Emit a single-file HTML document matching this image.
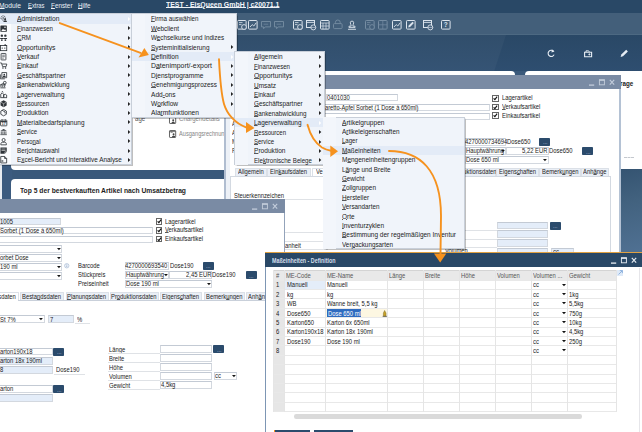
<!DOCTYPE html>
<html lang="de"><head><meta charset="utf-8"><title>TEST - EisQueen GmbH</title><style>
html,body{margin:0;padding:0}
body{width:642px;height:432px;overflow:hidden;position:relative;background:#2a4866;font-family:"Liberation Sans",sans-serif}
#r{position:absolute;left:0;top:0;width:642px;height:432px;overflow:hidden}
#r div{position:absolute;box-sizing:border-box}
#r span{position:absolute;white-space:pre;transform-origin:0 50%}
#r svg{position:absolute;overflow:visible}
u{text-decoration:underline;text-decoration-thickness:0.55px;text-underline-offset:0.3px;text-decoration-color:rgba(20,20,20,.7)}
u.w{text-decoration-color:#eef2f7}
</style></head><body><div id="r">
<div style="left:0.00px;top:12.00px;width:642.00px;height:23.00px;background:#435f7a;"></div>
<div style="left:0.00px;top:0.00px;width:642.00px;height:12.80px;background:#294866;"></div>
<div style="left:0.00px;top:35.00px;width:642.00px;height:37.00px;background:linear-gradient(#2a4866,#2e4e70);"></div>
<svg style="left:0.00px;top:35.00px" width="642" height="37" viewBox="0 0 642 37"><polygon points="0,0 506,0 494,37 0,37" fill="#ffffff" fill-opacity="0.035"/></svg>
<div style="left:0.00px;top:34.30px;width:642.00px;height:0.80px;background:#4d6982;"></div>
<div style="left:0.00px;top:71.00px;width:642.00px;height:361.00px;background:#3a597b;"></div>
<div style="left:600.00px;top:160.00px;width:42.00px;height:100.00px;background:linear-gradient(165deg,#31506e 5%,#42627f 45%,#527396 100%);"></div>
<div style="left:2.00px;top:71.00px;width:10.00px;height:140.00px;background:#3c5b7f;"></div>
<div style="left:0.00px;top:71.00px;width:2.00px;height:140.00px;background:#e8ecf1;"></div>
<span style="left:-1.50px;top:1.00px;font-size:6.6px;line-height:10px;color:#e8eef5;transform:scaleX(1.017);"><u class="w">M</u>odule</span>
<span style="left:27.50px;top:1.00px;font-size:6.6px;line-height:10px;color:#e8eef5;transform:scaleX(0.882);"><u class="w">E</u>xtras</span>
<span style="left:50.70px;top:1.00px;font-size:6.6px;line-height:10px;color:#e8eef5;transform:scaleX(0.962);"><u class="w">F</u>enster</span>
<span style="left:78.00px;top:1.00px;font-size:6.6px;line-height:10px;color:#e8eef5;transform:scaleX(0.947);"><u class="w">H</u>ilfe</span>
<span style="left:166.00px;top:0.20px;font-size:6.6px;line-height:10px;color:#f2f5f9;font-weight:bold;transform:scaleX(1.053);"><u class="w">TEST - EisQueen GmbH | c20071.1</u></span>
<svg style="left:236.50px;top:19.50px" width="10" height="10" viewBox="0 0 10 10"><rect x="0.5" y="0.5" width="8.6" height="8.6" rx="0.8" fill="none" stroke="#dbe3ec" stroke-width="1"/><path d="M2 2.6h3.5M2 4.6h2.5" stroke="#dbe3ec" stroke-width="0.8"/><circle cx="7" cy="7" r="2.4" fill="#435f7a" stroke="#dbe3ec" stroke-width="0.9"/></svg>
<svg style="left:247.50px;top:19.50px" width="10" height="10" viewBox="0 0 10 10"><rect x="0.5" y="0.5" width="8.6" height="8.6" rx="0.8" fill="none" stroke="#dbe3ec" stroke-width="1"/><path d="M2 7l2.2-2.4 1.6 1.4 2.4-3.2" stroke="#dbe3ec" stroke-width="0.9" fill="none"/></svg>
<svg style="left:260.50px;top:19.50px" width="10" height="10" viewBox="0 0 10 10"><path d="M0.5 1.5h9v5.4H4.2l-1.6 1.8V6.9H0.5z" fill="none" stroke="#768da3" stroke-width="0.9"/><path d="M2.6 4.2h4.6" stroke="#768da3" stroke-width="0.7"/></svg>
<svg style="left:274.00px;top:19.50px" width="10" height="10" viewBox="0 0 10 10"><path d="M0.5 1.5h9v5.4H4.2l-1.6 1.8V6.9H0.5z" fill="none" stroke="#768da3" stroke-width="0.9"/><path d="M2.6 4.2h4.6" stroke="#768da3" stroke-width="0.7"/></svg>
<svg style="left:292.50px;top:19.50px" width="10" height="10" viewBox="0 0 10 10"><rect x="0.5" y="0.5" width="8.6" height="8.6" rx="0.8" fill="none" stroke="#dbe3ec" stroke-width="1"/><path d="M2 2.6h3.5M2 4.6h2.5" stroke="#dbe3ec" stroke-width="0.8"/><circle cx="7" cy="7" r="2.4" fill="#435f7a" stroke="#dbe3ec" stroke-width="0.9"/></svg>
<svg style="left:306.00px;top:19.50px" width="10" height="10" viewBox="0 0 10 10"><rect x="0.5" y="0.5" width="8" height="7" fill="none" stroke="#dbe3ec" stroke-width="1"/><path d="M0.5 2.4h8" stroke="#dbe3ec" stroke-width="0.9"/><circle cx="7.3" cy="7.4" r="2.5" fill="#435f7a" stroke="#dbe3ec" stroke-width="0.9"/><path d="M4.8 7.4h5" stroke="#dbe3ec" stroke-width="0.6"/></svg>
<svg style="left:319.50px;top:19.50px" width="10" height="10" viewBox="0 0 10 10"><rect x="0.5" y="0.5" width="8.6" height="8.6" rx="0.8" fill="none" stroke="#dbe3ec" stroke-width="1"/><path d="M0.5 3h8.6M3 3v6M6 3v6M0.5 6h8.6" stroke="#dbe3ec" stroke-width="0.7" fill="none"/></svg>
<svg style="left:333.00px;top:19.50px" width="10" height="10" viewBox="0 0 10 10"><rect x="0.5" y="3.6" width="8.6" height="5" rx="1" fill="none" stroke="#768da3" stroke-width="0.9"/><path d="M2.4 3.6v-1.2a2.4 2.4 0 0 1 4.8 0v1.2" fill="none" stroke="#768da3" stroke-width="0.9"/></svg>
<svg style="left:346.50px;top:19.50px" width="10" height="10" viewBox="0 0 10 10"><path d="M1 9.3h8M2 7.6h6v-1.4h-2.2c0-1.6 0.9-2 0.9-3.4a1.7 1.7 0 0 0-3.4 0c0 1.4 0.9 1.8 0.9 3.4H2z" fill="none" stroke="#dbe3ec" stroke-width="0.9"/></svg>
<svg style="left:364.50px;top:19.50px" width="10" height="10" viewBox="0 0 10 10"><rect x="0.5" y="0.5" width="8.6" height="8.6" rx="0.8" fill="none" stroke="#768da3" stroke-width="1"/><path d="M2 2.6h3.5M2 4.6h2.5" stroke="#768da3" stroke-width="0.8"/><circle cx="7" cy="7" r="2.4" fill="#435f7a" stroke="#768da3" stroke-width="0.9"/></svg>
<svg style="left:378.00px;top:19.50px" width="10" height="10" viewBox="0 0 10 10"><rect x="0.5" y="0.5" width="8.6" height="8.6" rx="0.8" fill="none" stroke="#768da3" stroke-width="1"/><path d="M4.8 0.5v8.6M0.5 4.8h8.6" stroke="#768da3" stroke-width="0.7"/></svg>
<svg style="left:391.50px;top:19.50px" width="10" height="10" viewBox="0 0 10 10"><rect x="0.5" y="0.5" width="8.6" height="8.6" rx="0.8" fill="none" stroke="#dbe3ec" stroke-width="1"/><path d="M2 7l2.2-2.4 1.6 1.4 2.4-3.2" stroke="#dbe3ec" stroke-width="0.9" fill="none"/></svg>
<svg style="left:405.50px;top:19.50px" width="10" height="10" viewBox="0 0 10 10"><rect x="0.5" y="0.5" width="8.6" height="8.6" rx="0.8" fill="none" stroke="#dbe3ec" stroke-width="1"/><path d="M2.2 7.4l0.5-1.9 3.8-3.8 1.4 1.4-3.8 3.8z" fill="#dbe3ec" stroke="none"/></svg>
<svg style="left:423.00px;top:19.50px" width="10" height="10" viewBox="0 0 10 10"><rect x="0.5" y="0.5" width="8" height="7" fill="none" stroke="#dbe3ec" stroke-width="1"/><path d="M0.5 2.4h8" stroke="#dbe3ec" stroke-width="0.9"/><circle cx="7.3" cy="7.4" r="2.5" fill="#435f7a" stroke="#dbe3ec" stroke-width="0.9"/><path d="M4.8 7.4h5" stroke="#dbe3ec" stroke-width="0.6"/></svg>
<svg style="left:441.00px;top:19.50px" width="10" height="10" viewBox="0 0 10 10"><rect x="0.5" y="0.5" width="8.6" height="8.6" rx="0.8" fill="none" stroke="#dbe3ec" stroke-width="1"/><text x="4.8" y="7.3" font-size="6.5" font-weight="bold" text-anchor="middle" fill="#dbe3ec" font-family="Liberation Sans,sans-serif">?</text></svg>
<svg style="left:547.00px;top:49.00px" width="8" height="9" viewBox="0 0 8 9"><path d="M6.6 2.4A3.1 3.1 0 1 0 7.1 5.6" fill="none" stroke="#e6edf4" stroke-width="1.1"/><path d="M4.9 0.2l2.6 2.2-3 1z" fill="#e6edf4"/></svg>
<svg style="left:584.00px;top:50.00px" width="8.5" height="7.5" viewBox="0 0 8.5 7.5"><path d="M0.6 2.2h7v4.6h-7z" fill="none" stroke="#e6edf4" stroke-width="1.1"/><path d="M2 2V0.8h2.6l0.8 1.2M5.4 3.4v2M4.4 4.4h2" fill="none" stroke="#e6edf4" stroke-width="0.9"/></svg>
<svg style="left:620.00px;top:49.00px" width="8" height="8.5" viewBox="0 0 8 8.5"><path d="M0.6 8l0.7-2.4 4.9-4.9 1.7 1.7-4.9 4.9z" fill="#e6edf4"/></svg>
<div style="left:11.00px;top:71.00px;width:504.00px;height:98.50px;background:#fff;border-radius:4px"></div>
<div style="left:524.50px;top:71.00px;width:130.00px;height:98.00px;background:#fff;border-radius:4px"></div>
<div style="left:11.00px;top:178.50px;width:504.00px;height:120.00px;background:#fff;border-radius:4px"></div>
<span style="left:179.00px;top:114.00px;font-size:6.4px;line-height:10px;color:#858585;transform:scaleX(0.950);">Chargendetails</span>
<span style="left:134.60px;top:114.20px;font-size:6.4px;line-height:10px;color:#555;transform:scaleX(0.950);">age</span>
<svg style="left:169.00px;top:130.20px" width="7.4" height="8" viewBox="0 0 7.4 8"><rect x="0.5" y="0.5" width="6.2" height="7" rx="0.6" fill="none" stroke="#555" stroke-width="0.9"/><path d="M1.6 2.2h2M0.5 1.6h6.2" stroke="#555" stroke-width="0.8"/><circle cx="4.6" cy="4.2" r="1" fill="#444"/><path d="M2.9 7.2a1.7 1.7 0 0 1 3.4 0z" fill="#444"/></svg>
<svg style="left:169.00px;top:115.80px" width="7.4" height="8" viewBox="0 0 7.4 8"><rect x="0.5" y="0.5" width="6.2" height="7" rx="0.6" fill="none" stroke="#555" stroke-width="0.9"/><circle cx="4.2" cy="4.2" r="1" fill="#444"/><path d="M2.5 7.2a1.7 1.7 0 0 1 3.4 0z" fill="#444"/></svg>
<span style="left:179.00px;top:128.50px;font-size:6.4px;line-height:10px;color:#858585;transform:scaleX(0.883);">Ausgangsrechnun</span>
<span style="left:20.00px;top:186.00px;font-size:7px;line-height:10px;color:#1d1d1d;font-weight:bold;transform:scaleX(0.961);">Top 5 der bestverkauften Artikel nach Umsatzbetrag</span>
<span style="left:620.00px;top:79.00px;font-size:7px;line-height:10px;color:#1d1d1d;font-weight:bold;transform:scaleX(0.892);">rage</span>
<div style="left:623.60px;top:157.20px;width:10.00px;height:0.80px;border-top:0.8px dashed #c4c8ce"></div>
<div style="left:224.40px;top:74.50px;width:396.30px;height:360.00px;background:#fff;border-left:2.2px solid #b0bdd0;border-right:2px solid #b4c2d4"></div>
<div style="left:226.40px;top:88.00px;width:3.20px;height:350.00px;background:#edf1f7;"></div>
<div style="left:224.40px;top:74.50px;width:396.30px;height:0.90px;background:#eda440;"></div>
<div style="left:224.40px;top:75.40px;width:396.30px;height:13.30px;background:#7a8ba4;"></div>
<svg style="left:588.80px;top:79.10px" width="27" height="7" viewBox="0 0 27 7"><path d="M0 6.1h5.2" stroke="#c3cddb" stroke-width="1.3" fill="none"/><rect x="10.4" y="0.9" width="5" height="4.9" fill="none" stroke="#c3cddb" stroke-width="0.9"/><path d="M10 1.1h5.8" stroke="#c3cddb" stroke-width="1.4"/><path d="M20.8 0.9l4.4 4.8M25.2 0.9l-4.4 4.8" stroke="#c3cddb" stroke-width="1.1" fill="none"/></svg>
<div style="left:325.50px;top:94.10px;width:72.00px;height:7.40px;background:#fff;border:0.7px solid #d3d8df;border-top-color:#c3cad4"></div>
<span style="left:326.50px;top:93.00px;font-size:6.5px;line-height:10px;color:#1a1a1a;transform:scaleX(0.900);">0401030</span>
<div style="left:300.00px;top:103.60px;width:189.80px;height:7.40px;background:#fff;border:0.7px solid #d3d8df;border-top-color:#c3cad4"></div>
<span style="left:324.70px;top:102.50px;font-size:6.5px;line-height:10px;color:#1a1a1a;transform:scaleX(0.879);">aretto-Apfel Sorbet (1 Dose à 650ml)</span>
<div style="left:300.00px;top:112.60px;width:189.80px;height:7.20px;background:#fff;border:0.7px solid #d3d8df;border-top-color:#c3cad4"></div>
<div style="left:492.00px;top:95.00px;width:6.60px;height:6.60px;background:#fff;border:0.8px solid #666"></div>
<svg style="left:493.00px;top:96.00px" width="4.6" height="4.6" viewBox="0 0 4.6 4.6"><path d="M0.6 2.3 L1.9 3.7 L4.1 0.7" fill="none" stroke="#111" stroke-width="1.1"/></svg>
<span style="left:502.00px;top:93.40px;font-size:6.5px;line-height:10px;color:#1a1a1a;transform:scaleX(0.900);">Lagerartikel</span>
<div style="left:492.00px;top:103.70px;width:6.60px;height:6.60px;background:#fff;border:0.8px solid #666"></div>
<svg style="left:493.00px;top:104.70px" width="4.6" height="4.6" viewBox="0 0 4.6 4.6"><path d="M0.6 2.3 L1.9 3.7 L4.1 0.7" fill="none" stroke="#111" stroke-width="1.1"/></svg>
<span style="left:502.00px;top:102.10px;font-size:6.5px;line-height:10px;color:#1a1a1a;transform:scaleX(0.900);"><u>V</u>erkaufsartikel</span>
<div style="left:492.00px;top:112.40px;width:6.60px;height:6.60px;background:#fff;border:0.8px solid #666"></div>
<svg style="left:493.00px;top:113.40px" width="4.6" height="4.6" viewBox="0 0 4.6 4.6"><path d="M0.6 2.3 L1.9 3.7 L4.1 0.7" fill="none" stroke="#111" stroke-width="1.1"/></svg>
<span style="left:502.00px;top:110.80px;font-size:6.5px;line-height:10px;color:#1a1a1a;transform:scaleX(0.900);">Einkaufsartikel</span>
<div style="left:465.00px;top:138.20px;width:40.50px;height:7.60px;background:#fff;border:0.7px solid #d3d8df;border-top-color:#c3cad4"></div>
<span style="left:465.30px;top:137.20px;font-size:6.5px;line-height:10px;color:#1a1a1a;transform:scaleX(0.900);">4270000734694</span>
<span style="left:507.00px;top:137.30px;font-size:6.5px;line-height:10px;color:#1a1a1a;transform:scaleX(0.900);">Dose650</span>
<div style="left:539.30px;top:137.60px;width:11.20px;height:8.40px;background:#2b4b6c;border-radius:0.8px"></div>
<span style="left:542.64px;top:137.40px;font-size:6px;line-height:10px;color:#c9d5e3;transform:scaleX(0.900);">...</span>
<div style="left:465.00px;top:147.30px;width:40.50px;height:7.60px;background:#fff;border:0.7px solid #d3d8df;border-top-color:#c3cad4"></div>
<span style="left:465.50px;top:146.30px;font-size:6.5px;line-height:10px;color:#1a1a1a;transform:scaleX(0.900);">Hauptwährung</span>
<svg style="left:501.05px;top:150.33px" width="3.9" height="2.35" viewBox="0 0 3.9 2.35"><polygon points="0,0 3.9,0 1.95,2.25" fill="#151515"/></svg>
<div style="left:505.50px;top:147.30px;width:43.00px;height:7.60px;background:#fff;border:0.7px solid #d3d8df;border-top-color:#c3cad4"></div>
<span style="left:522.13px;top:146.40px;font-size:6.5px;line-height:10px;color:#1a1a1a;transform:scaleX(0.900);">5,22 EUR</span>
<span style="left:549.30px;top:146.40px;font-size:6.5px;line-height:10px;color:#1a1a1a;transform:scaleX(0.900);">Dose650</span>
<div style="left:582.30px;top:146.80px;width:11.20px;height:8.40px;background:#2b4b6c;border-radius:0.8px"></div>
<span style="left:585.64px;top:146.60px;font-size:6px;line-height:10px;color:#c9d5e3;transform:scaleX(0.900);">...</span>
<div style="left:465.00px;top:156.30px;width:83.50px;height:7.60px;background:#fff;border:0.7px solid #d3d8df;border-top-color:#c3cad4"></div>
<span style="left:465.50px;top:155.30px;font-size:6.5px;line-height:10px;color:#1a1a1a;transform:scaleX(0.900);">Dose 650 ml</span>
<svg style="left:543.05px;top:159.33px" width="3.9" height="2.35" viewBox="0 0 3.9 2.35"><polygon points="0,0 3.9,0 1.95,2.25" fill="#151515"/></svg>
<div style="left:235.00px;top:167.50px;width:31.50px;height:8.90px;background:#eaeff6;border:0.6px solid #dbe0e7;border-bottom:none;border-radius:1px 1px 0 0"></div>
<span style="left:237.90px;top:167.25px;font-size:6.5px;line-height:10px;color:#1a1a1a;transform:scaleX(0.900);">Allgemein</span>
<div style="left:267.00px;top:167.50px;width:44.00px;height:8.90px;background:#eaeff6;border:0.6px solid #dbe0e7;border-bottom:none;border-radius:1px 1px 0 0"></div>
<span style="left:270.45px;top:167.25px;font-size:6.5px;line-height:10px;color:#1a1a1a;transform:scaleX(0.900);">Ein<u>k</u>aufsdaten</span>
<div style="left:311.50px;top:167.50px;width:40.00px;height:8.90px;background:#fff;border:0.6px solid #dbe0e7;border-bottom:none;border-radius:1px 1px 0 0"></div>
<span style="left:331.50px;top:167.25px;font-size:6.5px;line-height:10px;color:#1a1a1a;transform:scaleX(0.900);"></span>
<div style="left:452.00px;top:167.50px;width:43.50px;height:8.90px;background:#eaeff6;border:0.6px solid #dbe0e7;border-bottom:none;border-radius:1px 1px 0 0"></div>
<span style="left:450.98px;top:167.25px;font-size:6.5px;line-height:10px;color:#1a1a1a;transform:scaleX(0.900);">Produktionsdaten</span>
<div style="left:496.00px;top:167.50px;width:42.50px;height:8.90px;background:#eaeff6;border:0.6px solid #dbe0e7;border-bottom:none;border-radius:1px 1px 0 0"></div>
<span style="left:498.71px;top:167.25px;font-size:6.5px;line-height:10px;color:#1a1a1a;transform:scaleX(0.900);">Eigens<u>c</u>haften</span>
<div style="left:539.00px;top:167.50px;width:41.50px;height:8.90px;background:#eaeff6;border:0.6px solid #dbe0e7;border-bottom:none;border-radius:1px 1px 0 0"></div>
<span style="left:541.52px;top:167.25px;font-size:6.5px;line-height:10px;color:#1a1a1a;transform:scaleX(0.900);">Bemerk<u>u</u>ngen</span>
<div style="left:581.00px;top:167.50px;width:27.50px;height:8.90px;background:#eaeff6;border:0.6px solid #dbe0e7;border-bottom:none;border-radius:1px 1px 0 0"></div>
<span style="left:583.02px;top:167.25px;font-size:6.5px;line-height:10px;color:#1a1a1a;transform:scaleX(0.900);">Anh<u>ä</u>nge</span>
<span style="left:316.00px;top:166.70px;font-size:6.5px;line-height:10px;color:#1a1a1a;transform:scaleX(0.900);">Ve</span>
<div style="left:229.60px;top:176.30px;width:381.40px;height:260.00px;background:#fff;border:0.7px solid #d3d9e1"></div>
<span style="left:234.00px;top:191.00px;font-size:6.5px;line-height:10px;color:#1a1a1a;transform:scaleX(0.900);">Steuerkennzeichen</span>
<div style="left:234.00px;top:200.20px;width:50.00px;height:0.60px;background:#d5d9de;"></div>
<span style="left:231.70px;top:118.70px;font-size:6.5px;line-height:10px;color:#1a1a1a;transform:scaleX(0.900);">Artikelart</span>
<span style="left:231.70px;top:127.80px;font-size:6.5px;line-height:10px;color:#1a1a1a;transform:scaleX(0.900);">Artikelgruppe</span>
<span style="left:231.70px;top:136.90px;font-size:6.5px;line-height:10px;color:#1a1a1a;transform:scaleX(0.900);">ME-Gruppe</span>
<span style="left:231.70px;top:146.00px;font-size:6.5px;line-height:10px;color:#1a1a1a;transform:scaleX(0.900);">Preisliste</span>
<div style="left:284.00px;top:199.30px;width:44.00px;height:0.60px;background:#dfe2e6;"></div>
<div style="left:284.00px;top:232.00px;width:44.00px;height:0.60px;background:#dfe2e6;"></div>
<div style="left:284.00px;top:240.80px;width:44.00px;height:0.60px;background:#dfe2e6;"></div>
<div style="left:284.00px;top:249.20px;width:44.00px;height:0.60px;background:#dfe2e6;"></div>
<span style="left:284.50px;top:241.00px;font-size:6.5px;line-height:10px;color:#1a1a1a;transform:scaleX(0.900);">anheit</span>
<span style="left:445.00px;top:245.50px;font-size:6.5px;line-height:10px;color:#1a1a1a;transform:scaleX(0.900);">Volumen</span>
<div style="left:497.00px;top:221.70px;width:51.00px;height:7.70px;background:#e4edf9;border:0.7px solid #d3d8df;border-top-color:#c3cad4"></div>
<div style="left:465.00px;top:229.90px;width:32.00px;height:0.60px;background:#dfe2e6;"></div>
<div style="left:497.00px;top:230.42px;width:51.00px;height:7.70px;background:#e4edf9;border:0.7px solid #d3d8df;border-top-color:#c3cad4"></div>
<div style="left:465.00px;top:238.50px;width:32.00px;height:0.60px;background:#dfe2e6;"></div>
<div style="left:497.00px;top:239.14px;width:51.00px;height:7.70px;background:#e4edf9;border:0.7px solid #d3d8df;border-top-color:#c3cad4"></div>
<div style="left:465.00px;top:247.10px;width:32.00px;height:0.60px;background:#dfe2e6;"></div>
<div style="left:497.00px;top:247.86px;width:51.00px;height:7.70px;background:#e4edf9;border:0.7px solid #d3d8df;border-top-color:#c3cad4"></div>
<div style="left:465.00px;top:255.70px;width:32.00px;height:0.60px;background:#dfe2e6;"></div>
<div style="left:549.70px;top:221.60px;width:11.20px;height:8.40px;background:#2b4b6c;border-radius:0.8px"></div>
<span style="left:553.04px;top:221.40px;font-size:6px;line-height:10px;color:#c9d5e3;transform:scaleX(0.900);">...</span>
<div style="left:551.00px;top:247.80px;width:22.50px;height:7.60px;background:#e4edf9;border:0.7px solid #d3d8df;border-top-color:#c3cad4"></div>
<span style="left:552.50px;top:246.80px;font-size:6.5px;line-height:10px;color:#1a1a1a;transform:scaleX(0.900);">cc</span>
<div style="left:0.00px;top:198.50px;width:284.60px;height:240.00px;background:#fff;border-right:1.8px solid #93a3ba"></div>
<div style="left:0.00px;top:198.50px;width:284.60px;height:0.90px;background:#eda440;"></div>
<div style="left:0.00px;top:199.40px;width:284.60px;height:13.30px;background:#7a8ba4;"></div>
<svg style="left:251.80px;top:202.70px" width="27" height="7" viewBox="0 0 27 7"><path d="M0 6.1h5.2" stroke="#c3cddb" stroke-width="1.3" fill="none"/><rect x="10.4" y="0.9" width="5" height="4.9" fill="none" stroke="#c3cddb" stroke-width="0.9"/><path d="M10 1.1h5.8" stroke="#c3cddb" stroke-width="1.4"/><path d="M20.8 0.9l4.4 4.8M25.2 0.9l-4.4 4.8" stroke="#c3cddb" stroke-width="1.1" fill="none"/></svg>
<div style="left:-2.00px;top:217.60px;width:63.20px;height:7.90px;background:#e4edf9;border:0.7px solid #d3d8df;border-top-color:#c3cad4"></div>
<span style="left:0.30px;top:216.75px;font-size:6.5px;line-height:10px;color:#1a1a1a;transform:scaleX(0.900);">1005</span>
<div style="left:-2.00px;top:226.70px;width:154.50px;height:7.70px;background:#fff;border:0.7px solid #d3d8df;border-top-color:#c3cad4"></div>
<span style="left:0.30px;top:225.75px;font-size:6.5px;line-height:10px;color:#1a1a1a;transform:scaleX(0.900);">Sorbet (1 Dose à 650ml)</span>
<div style="left:-2.00px;top:235.90px;width:154.50px;height:7.50px;background:#fff;border:0.7px solid #d3d8df;border-top-color:#c3cad4"></div>
<div style="left:155.60px;top:218.30px;width:6.60px;height:6.60px;background:#fff;border:0.8px solid #666"></div>
<svg style="left:156.60px;top:219.30px" width="4.6" height="4.6" viewBox="0 0 4.6 4.6"><path d="M0.6 2.3 L1.9 3.7 L4.1 0.7" fill="none" stroke="#111" stroke-width="1.1"/></svg>
<span style="left:165.00px;top:216.70px;font-size:6.5px;line-height:10px;color:#1a1a1a;transform:scaleX(0.900);">Lagerartikel</span>
<div style="left:155.60px;top:227.05px;width:6.60px;height:6.60px;background:#fff;border:0.8px solid #666"></div>
<svg style="left:156.60px;top:228.05px" width="4.6" height="4.6" viewBox="0 0 4.6 4.6"><path d="M0.6 2.3 L1.9 3.7 L4.1 0.7" fill="none" stroke="#111" stroke-width="1.1"/></svg>
<span style="left:165.00px;top:225.45px;font-size:6.5px;line-height:10px;color:#1a1a1a;transform:scaleX(0.900);"><u>V</u>erkaufsartikel</span>
<div style="left:155.60px;top:235.80px;width:6.60px;height:6.60px;background:#fff;border:0.8px solid #666"></div>
<svg style="left:156.60px;top:236.80px" width="4.6" height="4.6" viewBox="0 0 4.6 4.6"><path d="M0.6 2.3 L1.9 3.7 L4.1 0.7" fill="none" stroke="#111" stroke-width="1.1"/></svg>
<span style="left:165.00px;top:234.20px;font-size:6.5px;line-height:10px;color:#1a1a1a;transform:scaleX(0.900);">Einkaufsartikel</span>
<div style="left:-2.00px;top:244.80px;width:63.50px;height:7.80px;background:#fff;border:0.7px solid #d3d8df;border-top-color:#c3cad4"></div>
<svg style="left:56.55px;top:248.03px" width="3.9" height="2.35" viewBox="0 0 3.9 2.35"><polygon points="0,0 3.9,0 1.95,2.25" fill="#151515"/></svg>
<div style="left:-2.00px;top:253.85px;width:63.50px;height:7.80px;background:#fff;border:0.7px solid #d3d8df;border-top-color:#c3cad4"></div>
<span style="left:0.30px;top:252.95px;font-size:6.5px;line-height:10px;color:#1a1a1a;transform:scaleX(0.900);">orbet Dose</span>
<svg style="left:56.55px;top:257.07px" width="3.9" height="2.35" viewBox="0 0 3.9 2.35"><polygon points="0,0 3.9,0 1.95,2.25" fill="#151515"/></svg>
<div style="left:-2.00px;top:262.90px;width:63.50px;height:7.80px;background:#fff;border:0.7px solid #d3d8df;border-top-color:#c3cad4"></div>
<span style="left:0.30px;top:262.00px;font-size:6.5px;line-height:10px;color:#1a1a1a;transform:scaleX(0.900);">190 ml</span>
<svg style="left:56.55px;top:266.12px" width="3.9" height="2.35" viewBox="0 0 3.9 2.35"><polygon points="0,0 3.9,0 1.95,2.25" fill="#151515"/></svg>
<div style="left:-2.00px;top:271.95px;width:63.50px;height:7.80px;background:#fff;border:0.7px solid #d3d8df;border-top-color:#c3cad4"></div>
<svg style="left:56.55px;top:275.17px" width="3.9" height="2.35" viewBox="0 0 3.9 2.35"><polygon points="0,0 3.9,0 1.95,2.25" fill="#151515"/></svg>
<svg style="left:63.50px;top:263.20px" width="5.5" height="5.5" viewBox="0 0 5.5 5.5"><circle cx="2.75" cy="2.75" r="2.2" fill="#eef3fa" stroke="#9db2cf" stroke-width="0.6"/><path d="M2.75 2.4v1.6M2.75 1.4v0.5" stroke="#7f98bb" stroke-width="0.6"/></svg>
<span style="left:78.00px;top:261.00px;font-size:6.5px;line-height:10px;color:#1a1a1a;transform:scaleX(0.900);">Barcode</span>
<div style="left:125.00px;top:262.00px;width:44.00px;height:7.70px;background:#fff;border:0.7px solid #d3d8df;border-top-color:#c3cad4"></div>
<span style="left:125.30px;top:261.05px;font-size:6.5px;line-height:10px;color:#1a1a1a;transform:scaleX(0.900);">4270000693540</span>
<span style="left:170.00px;top:261.00px;font-size:6.5px;line-height:10px;color:#1a1a1a;transform:scaleX(0.900);">Dose190</span>
<div style="left:203.00px;top:261.60px;width:11.20px;height:8.40px;background:#2b4b6c;border-radius:0.8px"></div>
<span style="left:206.34px;top:261.40px;font-size:6px;line-height:10px;color:#c9d5e3;transform:scaleX(0.900);">...</span>
<span style="left:78.00px;top:270.20px;font-size:6.5px;line-height:10px;color:#1a1a1a;transform:scaleX(0.900);">Stückpreis</span>
<div style="left:125.00px;top:271.20px;width:43.50px;height:7.70px;background:#fff;border:0.7px solid #d3d8df;border-top-color:#c3cad4"></div>
<span style="left:125.50px;top:270.25px;font-size:6.5px;line-height:10px;color:#1a1a1a;transform:scaleX(0.900);">Hauptwährung</span>
<svg style="left:164.05px;top:274.22px" width="3.9" height="2.35" viewBox="0 0 3.9 2.35"><polygon points="0,0 3.9,0 1.95,2.25" fill="#151515"/></svg>
<div style="left:168.50px;top:271.20px;width:43.50px;height:7.70px;background:#fff;border:0.7px solid #d3d8df;border-top-color:#c3cad4"></div>
<span style="left:185.63px;top:270.30px;font-size:6.5px;line-height:10px;color:#1a1a1a;transform:scaleX(0.900);">2,45 EUR</span>
<span style="left:212.00px;top:270.30px;font-size:6.5px;line-height:10px;color:#1a1a1a;transform:scaleX(0.900);">Dose190</span>
<div style="left:246.00px;top:270.70px;width:11.20px;height:8.40px;background:#2b4b6c;border-radius:0.8px"></div>
<span style="left:249.34px;top:270.50px;font-size:6px;line-height:10px;color:#c9d5e3;transform:scaleX(0.900);">...</span>
<span style="left:78.00px;top:279.30px;font-size:6.5px;line-height:10px;color:#1a1a1a;transform:scaleX(0.900);">Preiseinheit</span>
<div style="left:125.00px;top:280.30px;width:86.50px;height:7.70px;background:#fff;border:0.7px solid #d3d8df;border-top-color:#c3cad4"></div>
<span style="left:125.50px;top:279.35px;font-size:6.5px;line-height:10px;color:#1a1a1a;transform:scaleX(0.900);">Dose 190 ml</span>
<svg style="left:206.55px;top:283.32px" width="3.9" height="2.35" viewBox="0 0 3.9 2.35"><polygon points="0,0 3.9,0 1.95,2.25" fill="#151515"/></svg>
<div style="left:-8.00px;top:292.00px;width:26.50px;height:8.90px;background:#fff;border:0.6px solid #dbe0e7;border-bottom:none;border-radius:1px 1px 0 0"></div>
<span style="left:-5.16px;top:291.75px;font-size:6.5px;line-height:10px;color:#1a1a1a;transform:scaleX(0.900);">  sdaten</span>
<div style="left:20.00px;top:292.00px;width:43.50px;height:8.90px;background:#eaeff6;border:0.6px solid #dbe0e7;border-bottom:none;border-radius:1px 1px 0 0"></div>
<span style="left:22.22px;top:291.75px;font-size:6.5px;line-height:10px;color:#1a1a1a;transform:scaleX(0.900);">Besta<u>n</u>dsdaten</span>
<div style="left:65.50px;top:292.00px;width:43.00px;height:8.90px;background:#eaeff6;border:0.6px solid #dbe0e7;border-bottom:none;border-radius:1px 1px 0 0"></div>
<span style="left:67.47px;top:291.75px;font-size:6.5px;line-height:10px;color:#1a1a1a;transform:scaleX(0.900);"><u>P</u>lanungsdaten</span>
<div style="left:110.00px;top:292.00px;width:48.50px;height:8.90px;background:#eaeff6;border:0.6px solid #dbe0e7;border-bottom:none;border-radius:1px 1px 0 0"></div>
<span style="left:111.48px;top:291.75px;font-size:6.5px;line-height:10px;color:#1a1a1a;transform:scaleX(0.900);">Pr<u>o</u>duktionsdaten</span>
<div style="left:160.00px;top:292.00px;width:42.00px;height:8.90px;background:#eaeff6;border:0.6px solid #dbe0e7;border-bottom:none;border-radius:1px 1px 0 0"></div>
<span style="left:162.46px;top:291.75px;font-size:6.5px;line-height:10px;color:#1a1a1a;transform:scaleX(0.900);">Eigens<u>c</u>haften</span>
<div style="left:203.50px;top:292.00px;width:41.00px;height:8.90px;background:#eaeff6;border:0.6px solid #dbe0e7;border-bottom:none;border-radius:1px 1px 0 0"></div>
<span style="left:205.78px;top:291.75px;font-size:6.5px;line-height:10px;color:#1a1a1a;transform:scaleX(0.900);">Bemerk<u>u</u>ngen</span>
<div style="left:246.00px;top:292.00px;width:27.00px;height:8.90px;background:#eaeff6;border:0.6px solid #dbe0e7;border-bottom:none;border-radius:1px 1px 0 0"></div>
<span style="left:247.77px;top:291.75px;font-size:6.5px;line-height:10px;color:#1a1a1a;transform:scaleX(0.900);">Anh<u>ä</u>nge</span>
<div style="left:-2.00px;top:300.00px;width:276.00px;height:140.00px;background:#fff;border:0.7px solid #c9d0da"></div>
<div style="left:-7.30px;top:299.50px;width:25.10px;height:1.40px;background:#fff;"></div>
<div style="left:-2.00px;top:315.30px;width:47.00px;height:8.00px;background:#fff;border:0.7px solid #d3d8df;border-top-color:#c3cad4"></div>
<span style="left:0.30px;top:314.50px;font-size:6.5px;line-height:10px;color:#1a1a1a;transform:scaleX(0.900);">St 7%</span>
<svg style="left:39.05px;top:318.42px" width="3.9" height="2.35" viewBox="0 0 3.9 2.35"><polygon points="0,0 3.9,0 1.95,2.25" fill="#151515"/></svg>
<div style="left:48.00px;top:315.30px;width:25.50px;height:8.00px;background:#e4edf9;border:0.7px solid #d3d8df;border-top-color:#c3cad4"></div>
<span style="left:49.50px;top:314.50px;font-size:6.5px;line-height:10px;color:#1a1a1a;transform:scaleX(0.900);">7</span>
<span style="left:76.50px;top:314.60px;font-size:6.5px;line-height:10px;color:#1a1a1a;transform:scaleX(0.900);">%</span>
<div style="left:75.00px;top:323.40px;width:15.00px;height:0.60px;background:#dfe2e6;"></div>
<div style="left:-2.00px;top:347.60px;width:54.50px;height:7.90px;background:#fff;border:0.7px solid #d3d8df;border-top-color:#c3cad4"></div>
<span style="left:0.30px;top:346.75px;font-size:6.5px;line-height:10px;color:#1a1a1a;transform:scaleX(0.900);">arton190x18</span>
<div style="left:53.30px;top:347.60px;width:11.20px;height:8.40px;background:#2b4b6c;border-radius:0.8px"></div>
<span style="left:56.64px;top:347.40px;font-size:6px;line-height:10px;color:#c9d5e3;transform:scaleX(0.900);">...</span>
<div style="left:-2.00px;top:356.80px;width:54.50px;height:7.90px;background:#e4edf9;border:0.7px solid #d3d8df;border-top-color:#c3cad4"></div>
<span style="left:0.30px;top:355.95px;font-size:6.5px;line-height:10px;color:#1a1a1a;transform:scaleX(0.900);">arton 18x 190ml</span>
<div style="left:-2.00px;top:366.00px;width:54.50px;height:7.90px;background:#e4edf9;border:0.7px solid #d3d8df;border-top-color:#c3cad4"></div>
<span style="left:0.30px;top:365.15px;font-size:6.5px;line-height:10px;color:#1a1a1a;transform:scaleX(0.900);">8</span>
<span style="left:56.00px;top:365.20px;font-size:6.5px;line-height:10px;color:#1a1a1a;transform:scaleX(0.900);">Dose190</span>
<div style="left:54.00px;top:374.00px;width:31.00px;height:0.60px;background:#dfe2e6;"></div>
<div style="left:-2.00px;top:385.00px;width:54.50px;height:7.90px;background:#fff;border:0.7px solid #d3d8df;border-top-color:#c3cad4"></div>
<span style="left:0.30px;top:384.15px;font-size:6.5px;line-height:10px;color:#1a1a1a;transform:scaleX(0.900);">arton</span>
<div style="left:53.30px;top:385.00px;width:11.20px;height:8.40px;background:#2b4b6c;border-radius:0.8px"></div>
<span style="left:56.64px;top:384.80px;font-size:6px;line-height:10px;color:#c9d5e3;transform:scaleX(0.900);">...</span>
<div style="left:-2.00px;top:394.20px;width:54.50px;height:7.90px;background:#e4edf9;border:0.7px solid #d3d8df;border-top-color:#c3cad4"></div>
<span style="left:108.50px;top:344.60px;font-size:6.5px;line-height:10px;color:#1a1a1a;transform:scaleX(0.900);">Länge</span>
<div style="left:107.50px;top:353.30px;width:52.00px;height:0.60px;background:#dfe2e6;"></div>
<div style="left:160.00px;top:345.00px;width:51.50px;height:7.90px;background:#fff;border:0.7px solid #d3d8df;border-top-color:#c3cad4"></div>
<span style="left:108.50px;top:353.60px;font-size:6.5px;line-height:10px;color:#1a1a1a;transform:scaleX(0.900);">Breite</span>
<div style="left:107.50px;top:362.30px;width:52.00px;height:0.60px;background:#dfe2e6;"></div>
<div style="left:160.00px;top:354.00px;width:51.50px;height:7.90px;background:#fff;border:0.7px solid #d3d8df;border-top-color:#c3cad4"></div>
<span style="left:108.50px;top:362.60px;font-size:6.5px;line-height:10px;color:#1a1a1a;transform:scaleX(0.900);">Höhe</span>
<div style="left:107.50px;top:371.30px;width:52.00px;height:0.60px;background:#dfe2e6;"></div>
<div style="left:160.00px;top:363.00px;width:51.50px;height:7.90px;background:#fff;border:0.7px solid #d3d8df;border-top-color:#c3cad4"></div>
<span style="left:108.50px;top:371.60px;font-size:6.5px;line-height:10px;color:#1a1a1a;transform:scaleX(0.900);">Volumen</span>
<div style="left:107.50px;top:380.30px;width:52.00px;height:0.60px;background:#dfe2e6;"></div>
<div style="left:160.00px;top:372.00px;width:51.50px;height:7.90px;background:#fff;border:0.7px solid #d3d8df;border-top-color:#c3cad4"></div>
<span style="left:108.50px;top:380.60px;font-size:6.5px;line-height:10px;color:#1a1a1a;transform:scaleX(0.900);">Gewicht</span>
<div style="left:107.50px;top:389.30px;width:52.00px;height:0.60px;background:#dfe2e6;"></div>
<div style="left:160.00px;top:381.00px;width:51.50px;height:7.90px;background:#fff;border:0.7px solid #d3d8df;border-top-color:#c3cad4"></div>
<span style="left:161.00px;top:380.15px;font-size:6.5px;line-height:10px;color:#1a1a1a;transform:scaleX(0.900);">4,5kg</span>
<div style="left:213.20px;top:345.00px;width:11.20px;height:8.40px;background:#2b4b6c;border-radius:0.8px"></div>
<span style="left:216.54px;top:344.80px;font-size:6px;line-height:10px;color:#c9d5e3;transform:scaleX(0.900);">...</span>
<div style="left:213.50px;top:372.00px;width:23.00px;height:8.00px;background:#fff;border:0.7px solid #d3d8df;border-top-color:#c3cad4"></div>
<span style="left:215.00px;top:371.20px;font-size:6.5px;line-height:10px;color:#1a1a1a;transform:scaleX(0.900);">cc</span>
<svg style="left:231.55px;top:375.22px" width="3.9" height="2.35" viewBox="0 0 3.9 2.35"><polygon points="0,0 3.9,0 1.95,2.25" fill="#151515"/></svg>
<div style="left:265.40px;top:252.20px;width:380.00px;height:185.00px;background:#fff;border-left:1.5px solid #7d96b4"></div>
<div style="left:265.40px;top:252.10px;width:380.00px;height:1.30px;background:#e0a142;"></div>
<div style="left:265.40px;top:253.40px;width:380.00px;height:13.40px;background:#294866;"></div>
<span style="left:272.00px;top:255.70px;font-size:6.3px;line-height:10px;color:#d5dfeb;font-weight:bold;transform:scaleX(0.848);">Maßeinheiten - Definition</span>
<svg style="left:611.00px;top:256.60px" width="27" height="7" viewBox="0 0 27 7"><path d="M0 6.1h5.2" stroke="#e9eff5" stroke-width="1.3" fill="none"/><rect x="10.4" y="0.9" width="5" height="4.9" fill="none" stroke="#e9eff5" stroke-width="0.9"/><path d="M10 1.1h5.8" stroke="#e9eff5" stroke-width="1.4"/><path d="M20.8 0.9l4.4 4.8M25.2 0.9l-4.4 4.8" stroke="#e9eff5" stroke-width="1.1" fill="none"/></svg>
<div style="left:639.00px;top:268.00px;width:0.70px;height:170.00px;background:#e6e6ea;"></div>
<div style="left:273.80px;top:270.00px;width:342.70px;height:10.00px;background:#e9e9e9;"></div>
<div style="left:273.80px;top:280.00px;width:10.70px;height:131.60px;background:#e6e6e6;"></div>
<div style="left:284.50px;top:280.00px;width:41.00px;height:9.40px;background:#e4edf9;"></div>
<div style="left:325.50px;top:308.20px;width:62.00px;height:9.40px;background:#fdf7e2;"></div>
<div style="left:273.80px;top:279.65px;width:342.70px;height:0.70px;background:#e8e8e8;"></div>
<div style="left:273.80px;top:289.05px;width:342.70px;height:0.70px;background:#e8e8e8;"></div>
<div style="left:273.80px;top:298.45px;width:342.70px;height:0.70px;background:#e8e8e8;"></div>
<div style="left:273.80px;top:307.85px;width:342.70px;height:0.70px;background:#e8e8e8;"></div>
<div style="left:273.80px;top:317.25px;width:342.70px;height:0.70px;background:#e8e8e8;"></div>
<div style="left:273.80px;top:326.65px;width:342.70px;height:0.70px;background:#e8e8e8;"></div>
<div style="left:273.80px;top:336.05px;width:342.70px;height:0.70px;background:#e8e8e8;"></div>
<div style="left:273.80px;top:345.45px;width:342.70px;height:0.70px;background:#e8e8e8;"></div>
<div style="left:273.80px;top:354.85px;width:342.70px;height:0.70px;background:#e8e8e8;"></div>
<div style="left:273.80px;top:364.25px;width:342.70px;height:0.70px;background:#e8e8e8;"></div>
<div style="left:273.80px;top:373.65px;width:342.70px;height:0.70px;background:#e8e8e8;"></div>
<div style="left:273.80px;top:383.05px;width:342.70px;height:0.70px;background:#e8e8e8;"></div>
<div style="left:273.80px;top:392.45px;width:342.70px;height:0.70px;background:#e8e8e8;"></div>
<div style="left:273.80px;top:401.85px;width:342.70px;height:0.70px;background:#e8e8e8;"></div>
<div style="left:273.80px;top:411.25px;width:342.70px;height:0.70px;background:#e8e8e8;"></div>
<div style="left:273.80px;top:269.65px;width:342.70px;height:0.70px;background:#d4d4d4;"></div>
<div style="left:273.45px;top:270.00px;width:0.70px;height:141.60px;background:#e5e5e5;"></div>
<span style="left:276.10px;top:270.50px;font-size:6.5px;line-height:10px;color:#555;transform:scaleX(0.900);">#</span>
<div style="left:284.15px;top:270.00px;width:0.70px;height:141.60px;background:#e5e5e5;"></div>
<span style="left:286.30px;top:270.50px;font-size:6.5px;line-height:10px;color:#555;transform:scaleX(0.900);">ME-Code</span>
<div style="left:325.15px;top:270.00px;width:0.70px;height:141.60px;background:#e5e5e5;"></div>
<span style="left:327.30px;top:270.50px;font-size:6.5px;line-height:10px;color:#555;transform:scaleX(0.900);">ME-Name</span>
<div style="left:387.15px;top:270.00px;width:0.70px;height:141.60px;background:#e5e5e5;"></div>
<span style="left:389.30px;top:270.50px;font-size:6.5px;line-height:10px;color:#555;transform:scaleX(0.900);">Länge</span>
<div style="left:422.65px;top:270.00px;width:0.70px;height:141.60px;background:#e5e5e5;"></div>
<span style="left:424.80px;top:270.50px;font-size:6.5px;line-height:10px;color:#555;transform:scaleX(0.900);">Breite</span>
<div style="left:458.65px;top:270.00px;width:0.70px;height:141.60px;background:#e5e5e5;"></div>
<span style="left:460.80px;top:270.50px;font-size:6.5px;line-height:10px;color:#555;transform:scaleX(0.900);">Höhe</span>
<div style="left:495.15px;top:270.00px;width:0.70px;height:141.60px;background:#e5e5e5;"></div>
<span style="left:497.30px;top:270.50px;font-size:6.5px;line-height:10px;color:#555;transform:scaleX(0.900);">Volumen</span>
<div style="left:531.15px;top:270.00px;width:0.70px;height:141.60px;background:#e5e5e5;"></div>
<span style="left:533.30px;top:270.50px;font-size:6.5px;line-height:10px;color:#555;transform:scaleX(0.900);">Volumen ...</span>
<div style="left:567.15px;top:270.00px;width:0.70px;height:141.60px;background:#e5e5e5;"></div>
<span style="left:569.30px;top:270.50px;font-size:6.5px;line-height:10px;color:#555;transform:scaleX(0.900);">Gewicht</span>
<div style="left:616.20px;top:270.00px;width:0.70px;height:141.60px;background:#e5e5e5;"></div>
<span style="left:276.30px;top:280.40px;font-size:6.5px;line-height:10px;color:#1a1a1a;transform:scaleX(0.900);">1</span>
<span style="left:287.00px;top:280.40px;font-size:6.5px;line-height:10px;color:#1a1a1a;transform:scaleX(0.900);">Manuell</span>
<span style="left:327.30px;top:280.40px;font-size:6.5px;line-height:10px;color:#1a1a1a;transform:scaleX(0.900);">Manuell</span>
<span style="left:533.30px;top:280.40px;font-size:6.5px;line-height:10px;color:#1a1a1a;transform:scaleX(0.900);">cc</span>
<svg style="left:561.50px;top:283.50px" width="4.0" height="2.4" viewBox="0 0 4.0 2.4"><polygon points="0,0 4.0,0 2.0,2.3" fill="#111"/></svg>
<span style="left:276.30px;top:289.80px;font-size:6.5px;line-height:10px;color:#1a1a1a;transform:scaleX(0.900);">2</span>
<span style="left:287.00px;top:289.80px;font-size:6.5px;line-height:10px;color:#1a1a1a;transform:scaleX(0.900);">kg</span>
<span style="left:327.30px;top:289.80px;font-size:6.5px;line-height:10px;color:#1a1a1a;transform:scaleX(0.900);">kg</span>
<span style="left:533.30px;top:289.80px;font-size:6.5px;line-height:10px;color:#1a1a1a;transform:scaleX(0.900);">cc</span>
<svg style="left:561.50px;top:292.90px" width="4.0" height="2.4" viewBox="0 0 4.0 2.4"><polygon points="0,0 4.0,0 2.0,2.3" fill="#111"/></svg>
<span style="left:569.00px;top:289.80px;font-size:6.5px;line-height:10px;color:#1a1a1a;transform:scaleX(0.900);">1kg</span>
<span style="left:276.30px;top:299.20px;font-size:6.5px;line-height:10px;color:#1a1a1a;transform:scaleX(0.900);">3</span>
<span style="left:287.00px;top:299.20px;font-size:6.5px;line-height:10px;color:#1a1a1a;transform:scaleX(0.900);">WB</span>
<span style="left:327.30px;top:299.20px;font-size:6.5px;line-height:10px;color:#1a1a1a;transform:scaleX(0.900);">Wanne breit, 5,5 kg</span>
<span style="left:533.30px;top:299.20px;font-size:6.5px;line-height:10px;color:#1a1a1a;transform:scaleX(0.900);">cc</span>
<svg style="left:561.50px;top:302.30px" width="4.0" height="2.4" viewBox="0 0 4.0 2.4"><polygon points="0,0 4.0,0 2.0,2.3" fill="#111"/></svg>
<span style="left:569.00px;top:299.20px;font-size:6.5px;line-height:10px;color:#1a1a1a;transform:scaleX(0.900);">5,5kg</span>
<span style="left:276.30px;top:308.60px;font-size:6.5px;line-height:10px;color:#1a1a1a;transform:scaleX(0.900);">4</span>
<span style="left:287.00px;top:308.60px;font-size:6.5px;line-height:10px;color:#1a1a1a;transform:scaleX(0.900);">Dose650</span>
<div style="left:327.30px;top:309.30px;width:33.60px;height:7.60px;background:#2e6bc0;"></div>
<span style="left:328.00px;top:308.60px;font-size:6.5px;line-height:10px;color:#fff;transform:scaleX(0.900);">Dose 650 ml</span>
<span style="left:533.30px;top:308.60px;font-size:6.5px;line-height:10px;color:#1a1a1a;transform:scaleX(0.900);">cc</span>
<svg style="left:561.50px;top:311.70px" width="4.0" height="2.4" viewBox="0 0 4.0 2.4"><polygon points="0,0 4.0,0 2.0,2.3" fill="#111"/></svg>
<span style="left:569.00px;top:308.60px;font-size:6.5px;line-height:10px;color:#1a1a1a;transform:scaleX(0.900);">750g</span>
<span style="left:276.30px;top:318.00px;font-size:6.5px;line-height:10px;color:#1a1a1a;transform:scaleX(0.900);">5</span>
<span style="left:287.00px;top:318.00px;font-size:6.5px;line-height:10px;color:#1a1a1a;transform:scaleX(0.900);">Karton650</span>
<span style="left:327.30px;top:318.00px;font-size:6.5px;line-height:10px;color:#1a1a1a;transform:scaleX(0.900);">Karton 6x 650ml</span>
<span style="left:533.30px;top:318.00px;font-size:6.5px;line-height:10px;color:#1a1a1a;transform:scaleX(0.900);">cc</span>
<svg style="left:561.50px;top:321.10px" width="4.0" height="2.4" viewBox="0 0 4.0 2.4"><polygon points="0,0 4.0,0 2.0,2.3" fill="#111"/></svg>
<span style="left:569.00px;top:318.00px;font-size:6.5px;line-height:10px;color:#1a1a1a;transform:scaleX(0.900);">10kg</span>
<span style="left:276.30px;top:327.40px;font-size:6.5px;line-height:10px;color:#1a1a1a;transform:scaleX(0.900);">6</span>
<span style="left:287.00px;top:327.40px;font-size:6.5px;line-height:10px;color:#1a1a1a;transform:scaleX(0.900);">Karton190x18</span>
<span style="left:327.30px;top:327.40px;font-size:6.5px;line-height:10px;color:#1a1a1a;transform:scaleX(0.900);">Karton 18x 190ml</span>
<span style="left:533.30px;top:327.40px;font-size:6.5px;line-height:10px;color:#1a1a1a;transform:scaleX(0.900);">cc</span>
<svg style="left:561.50px;top:330.50px" width="4.0" height="2.4" viewBox="0 0 4.0 2.4"><polygon points="0,0 4.0,0 2.0,2.3" fill="#111"/></svg>
<span style="left:569.00px;top:327.40px;font-size:6.5px;line-height:10px;color:#1a1a1a;transform:scaleX(0.900);">4,5kg</span>
<span style="left:276.30px;top:336.80px;font-size:6.5px;line-height:10px;color:#1a1a1a;transform:scaleX(0.900);">7</span>
<span style="left:287.00px;top:336.80px;font-size:6.5px;line-height:10px;color:#1a1a1a;transform:scaleX(0.900);">Dose190</span>
<span style="left:327.30px;top:336.80px;font-size:6.5px;line-height:10px;color:#1a1a1a;transform:scaleX(0.900);">Dose 190 ml</span>
<span style="left:533.30px;top:336.80px;font-size:6.5px;line-height:10px;color:#1a1a1a;transform:scaleX(0.900);">cc</span>
<svg style="left:561.50px;top:339.90px" width="4.0" height="2.4" viewBox="0 0 4.0 2.4"><polygon points="0,0 4.0,0 2.0,2.3" fill="#111"/></svg>
<span style="left:569.00px;top:336.80px;font-size:6.5px;line-height:10px;color:#1a1a1a;transform:scaleX(0.900);">250g</span>
<span style="left:276.30px;top:346.20px;font-size:6.5px;line-height:10px;color:#1a1a1a;transform:scaleX(0.900);">8</span>
<span style="left:533.30px;top:346.20px;font-size:6.5px;line-height:10px;color:#1a1a1a;transform:scaleX(0.900);">cc</span>
<svg style="left:561.50px;top:349.30px" width="4.0" height="2.4" viewBox="0 0 4.0 2.4"><polygon points="0,0 4.0,0 2.0,2.3" fill="#111"/></svg>
<svg style="left:381.50px;top:309.50px" width="5.5" height="7" viewBox="0 0 5.5 7"><path d="M2.6 0.5l1.4 2.6v3.2h-2.6V3.1z" fill="#c9a227" stroke="#7a6a2a" stroke-width="0.5"/><path d="M0.6 6.4h4.4" stroke="#555" stroke-width="0.7"/></svg>
<div style="left:617.40px;top:270.00px;width:5.40px;height:5.60px;background:#dfeaf8;"></div>
<svg style="left:617.60px;top:270.30px" width="5" height="5" viewBox="0 0 5 5"><path d="M0.5 4.5L4.3 0.7M1.8 0.6h2.6v2.6" fill="none" stroke="#7aa4d8" stroke-width="0.8"/></svg>
<div style="left:294.00px;top:414.40px;width:288.00px;height:4.40px;background:#dadada;border-radius:2.2px"></div>
<div style="left:273.80px;top:429.60px;width:36.40px;height:6.00px;background:#2b4b6c;border-left:1.8px solid #f6921e"></div>
<div style="left:313.80px;top:429.60px;width:39.40px;height:6.00px;background:#2b4b6c;"></div>
<div style="left:-1.00px;top:12.90px;width:132.80px;height:152.10px;background:#f0f4fa;border:0.7px solid #c8cfd9;box-shadow:0.5px 0.5px 1px rgba(0,0,0,.25)"></div>
<div style="left:-0.30px;top:13.60px;width:11.00px;height:150.70px;background:#fbfcfe;"></div>
<div style="left:-0.30px;top:14.30px;width:131.40px;height:9.40px;background:#e3ebf7;"></div>
<span style="left:17.00px;top:14.45px;font-size:6.6px;line-height:10px;color:#1c1c1c;transform:scaleX(1.017);"><u>A</u>dministration</span>
<svg style="left:127.60px;top:17.00px" width="2.4" height="4.0" viewBox="0 0 2.4 4.0"><polygon points="0,0 2.3,2.0 0,4.0" fill="#fff"/></svg>
<span style="left:17.00px;top:23.85px;font-size:6.6px;line-height:10px;color:#1c1c1c;transform:scaleX(0.926);"><u>F</u>inanzwesen</span>
<svg style="left:127.60px;top:26.40px" width="2.4" height="4.0" viewBox="0 0 2.4 4.0"><polygon points="0,0 2.3,2.0 0,4.0" fill="#222"/></svg>
<span style="left:17.00px;top:33.25px;font-size:6.6px;line-height:10px;color:#1c1c1c;transform:scaleX(0.931);"><u>C</u>RM</span>
<svg style="left:127.60px;top:35.80px" width="2.4" height="4.0" viewBox="0 0 2.4 4.0"><polygon points="0,0 2.3,2.0 0,4.0" fill="#222"/></svg>
<span style="left:17.00px;top:42.65px;font-size:6.6px;line-height:10px;color:#1c1c1c;transform:scaleX(1.029);"><u>O</u>pportunitys</span>
<svg style="left:127.60px;top:45.20px" width="2.4" height="4.0" viewBox="0 0 2.4 4.0"><polygon points="0,0 2.3,2.0 0,4.0" fill="#222"/></svg>
<span style="left:17.00px;top:52.05px;font-size:6.6px;line-height:10px;color:#1c1c1c;transform:scaleX(0.983);"><u>V</u>erkauf</span>
<svg style="left:127.60px;top:54.60px" width="2.4" height="4.0" viewBox="0 0 2.4 4.0"><polygon points="0,0 2.3,2.0 0,4.0" fill="#222"/></svg>
<span style="left:17.00px;top:61.45px;font-size:6.6px;line-height:10px;color:#1c1c1c;transform:scaleX(0.954);"><u>E</u>inkauf</span>
<svg style="left:127.60px;top:64.00px" width="2.4" height="4.0" viewBox="0 0 2.4 4.0"><polygon points="0,0 2.3,2.0 0,4.0" fill="#222"/></svg>
<span style="left:17.00px;top:70.85px;font-size:6.6px;line-height:10px;color:#1c1c1c;transform:scaleX(0.959);"><u>G</u>eschäftspartner</span>
<svg style="left:127.60px;top:73.40px" width="2.4" height="4.0" viewBox="0 0 2.4 4.0"><polygon points="0,0 2.3,2.0 0,4.0" fill="#222"/></svg>
<span style="left:17.00px;top:80.25px;font-size:6.6px;line-height:10px;color:#1c1c1c;transform:scaleX(0.955);"><u>B</u>ankenabwicklung</span>
<svg style="left:127.60px;top:82.80px" width="2.4" height="4.0" viewBox="0 0 2.4 4.0"><polygon points="0,0 2.3,2.0 0,4.0" fill="#222"/></svg>
<span style="left:17.00px;top:89.65px;font-size:6.6px;line-height:10px;color:#1c1c1c;transform:scaleX(0.974);"><u>L</u>agerverwaltung</span>
<svg style="left:127.60px;top:92.20px" width="2.4" height="4.0" viewBox="0 0 2.4 4.0"><polygon points="0,0 2.3,2.0 0,4.0" fill="#222"/></svg>
<span style="left:17.00px;top:99.05px;font-size:6.6px;line-height:10px;color:#1c1c1c;transform:scaleX(0.909);"><u>R</u>essourcen</span>
<svg style="left:127.60px;top:101.60px" width="2.4" height="4.0" viewBox="0 0 2.4 4.0"><polygon points="0,0 2.3,2.0 0,4.0" fill="#222"/></svg>
<span style="left:17.00px;top:108.45px;font-size:6.6px;line-height:10px;color:#1c1c1c;transform:scaleX(0.999);"><u>P</u>roduktion</span>
<svg style="left:127.60px;top:111.00px" width="2.4" height="4.0" viewBox="0 0 2.4 4.0"><polygon points="0,0 2.3,2.0 0,4.0" fill="#222"/></svg>
<span style="left:17.00px;top:117.85px;font-size:6.6px;line-height:10px;color:#1c1c1c;transform:scaleX(0.979);"><u>M</u>aterialbedarfsplanung</span>
<svg style="left:127.60px;top:120.40px" width="2.4" height="4.0" viewBox="0 0 2.4 4.0"><polygon points="0,0 2.3,2.0 0,4.0" fill="#222"/></svg>
<span style="left:17.00px;top:127.25px;font-size:6.6px;line-height:10px;color:#1c1c1c;transform:scaleX(0.909);"><u>S</u>ervice</span>
<svg style="left:127.60px;top:129.80px" width="2.4" height="4.0" viewBox="0 0 2.4 4.0"><polygon points="0,0 2.3,2.0 0,4.0" fill="#222"/></svg>
<span style="left:17.00px;top:136.65px;font-size:6.6px;line-height:10px;color:#1c1c1c;transform:scaleX(0.902);">Perso<u>n</u>al</span>
<svg style="left:127.60px;top:139.20px" width="2.4" height="4.0" viewBox="0 0 2.4 4.0"><polygon points="0,0 2.3,2.0 0,4.0" fill="#222"/></svg>
<span style="left:17.00px;top:146.05px;font-size:6.6px;line-height:10px;color:#1c1c1c;transform:scaleX(0.950);">Ber<u>i</u>chtauswahl</span>
<svg style="left:127.60px;top:148.60px" width="2.4" height="4.0" viewBox="0 0 2.4 4.0"><polygon points="0,0 2.3,2.0 0,4.0" fill="#222"/></svg>
<span style="left:17.00px;top:155.45px;font-size:6.6px;line-height:10px;color:#1c1c1c;transform:scaleX(0.966);">E<u>x</u>cel-Bericht und interaktive Analyse</span>
<svg style="left:127.60px;top:158.00px" width="2.4" height="4.0" viewBox="0 0 2.4 4.0"><polygon points="0,0 2.3,2.0 0,4.0" fill="#222"/></svg>
<svg style="left:0.30px;top:15.30px" width="7.4" height="7.4" viewBox="0 0 8 8"><circle cx="3.4" cy="3.2" r="2.3" fill="none" stroke="#2e3338" stroke-width="0.9" stroke-dasharray="1.2 0.6"/><circle cx="3.4" cy="3.2" r="0.8" fill="#2e3338"/><path d="M3.6 7.6a2 2 0 0 1 4 0z" fill="#2e3338"/><circle cx="5.6" cy="4.6" r="1" fill="#2e3338"/></svg>
<svg style="left:0.30px;top:24.70px" width="7.4" height="7.4" viewBox="0 0 8 8"><rect x="0.4" y="0.6" width="7" height="6.8" rx="0.6" fill="#2e3338"/><path d="M1.4 6.4l1.8-2.4 1.3 1.4 1-0.8 1 1.8z" fill="#fff"/><circle cx="5.4" cy="2.4" r="0.8" fill="#fff"/></svg>
<svg style="left:0.30px;top:34.10px" width="7.4" height="7.4" viewBox="0 0 8 8"><circle cx="2" cy="1.8" r="1.3" fill="#2e3338"/><circle cx="5.8" cy="1.8" r="1.3" fill="#2e3338"/><path d="M0.2 4.2h3.6v1.2H0.2zM4 4.2h3.6v1.2H4z" fill="#2e3338"/><circle cx="2" cy="6.6" r="1" fill="#2e3338"/><circle cx="5.8" cy="6.6" r="1" fill="#2e3338"/></svg>
<svg style="left:0.30px;top:43.50px" width="7.4" height="7.4" viewBox="0 0 8 8"><rect x="0.5" y="1.6" width="6.8" height="5.6" fill="none" stroke="#2e3338" stroke-width="0.9"/><circle cx="2.4" cy="4.4" r="0.7" fill="#2e3338"/><circle cx="5.2" cy="4.4" r="0.7" fill="#2e3338"/><circle cx="5.6" cy="1.2" r="1" fill="#2e3338"/></svg>
<svg style="left:0.30px;top:52.90px" width="7.4" height="7.4" viewBox="0 0 8 8"><rect x="1.2" y="0.5" width="5.2" height="7" rx="0.5" fill="none" stroke="#2e3338" stroke-width="0.9"/><path d="M2.4 2.4h2.8M2.4 4h2.8M2.4 5.6h1.6" stroke="#2e3338" stroke-width="0.7"/></svg>
<svg style="left:0.30px;top:62.30px" width="7.4" height="7.4" viewBox="0 0 8 8"><path d="M0.2 1h1.4l1.2 4h3.8l0.8-2.8H2.2" fill="none" stroke="#2e3338" stroke-width="0.9"/><circle cx="3.2" cy="6.6" r="0.8" fill="#2e3338"/><circle cx="6" cy="6.6" r="0.8" fill="#2e3338"/></svg>
<svg style="left:0.30px;top:71.70px" width="7.4" height="7.4" viewBox="0 0 8 8"><path d="M2 0.6h5.2v5.6H2z" fill="none" stroke="#2e3338" stroke-width="0.9"/><path d="M0.4 2.6v4.8h4.8" fill="none" stroke="#2e3338" stroke-width="0.9"/><circle cx="4.6" cy="2.8" r="0.9" fill="#2e3338"/><path d="M3 5.4a1.6 1.6 0 0 1 3.2 0z" fill="#2e3338"/></svg>
<svg style="left:0.30px;top:81.10px" width="7.4" height="7.4" viewBox="0 0 8 8"><circle cx="5.2" cy="1.9" r="1.5" fill="none" stroke="#2e3338" stroke-width="0.9"/><path d="M0.4 7.4h5.6M1 6.6V4.6M3 6.6V4.6M5 6.6V4.6M0.4 4.2l2.8-1.4 2.8 1.4z" fill="none" stroke="#2e3338" stroke-width="0.9"/></svg>
<svg style="left:0.30px;top:90.50px" width="7.4" height="7.4" viewBox="0 0 8 8"><path d="M0.4 7.2h7.2M0.8 7V3.4l1.6-1.2 1.6 1.2V7M4 7V4.4l1.6-1 1.6 1V7" fill="none" stroke="#2e3338" stroke-width="0.9"/><path d="M1.6 1.4l1-1 1 1" fill="none" stroke="#2e3338" stroke-width="0.9"/></svg>
<svg style="left:0.30px;top:99.90px" width="7.4" height="7.4" viewBox="0 0 8 8"><path d="M3.9 0.2l3.3 1.9v3.8L3.9 7.8 0.6 5.9V2.1z" fill="#2e3338"/><path d="M3.9 4v3.4M3.9 4L1 2.4M3.9 4l2.9-1.6" stroke="#fff" stroke-width="0.5"/></svg>
<svg style="left:0.30px;top:109.30px" width="7.4" height="7.4" viewBox="0 0 8 8"><path d="M3.9 0.5l3 1.7v3.5l-3 1.7-3-1.7V2.2z" fill="none" stroke="#2e3338" stroke-width="0.9"/><path d="M2.3 1.4l3.2 1.8v1.6" fill="none" stroke="#2e3338" stroke-width="0.9"/></svg>
<svg style="left:0.30px;top:118.70px" width="7.4" height="7.4" viewBox="0 0 8 8"><rect x="0.6" y="1.2" width="6.8" height="6.2" rx="0.6" fill="none" stroke="#2e3338" stroke-width="0.9"/><path d="M0.6 2.8h6.8" stroke="#2e3338" stroke-width="1.2"/><path d="M2.2 0.3v1.6M5.8 0.3v1.6" stroke="#2e3338" stroke-width="0.8"/><text x="4" y="6.8" font-size="3.8" font-weight="bold" text-anchor="middle" fill="#2e3338" font-family="Liberation Sans,sans-serif">17</text></svg>
<svg style="left:0.30px;top:128.10px" width="7.4" height="7.4" viewBox="0 0 8 8"><path d="M0.4 3l3.5-2 3.5 2z" fill="#2e3338"/><path d="M0.4 7.2h7M1.4 3.6v3M3.1 3.6v3M4.7 3.6v3M6.4 3.6v3" stroke="#2e3338" stroke-width="0.8"/></svg>
<svg style="left:0.30px;top:137.50px" width="7.4" height="7.4" viewBox="0 0 8 8"><circle cx="3.9" cy="2.2" r="1.7" fill="none" stroke="#2e3338" stroke-width="0.9"/><path d="M0.9 7.4V6.2a2 2 0 0 1 2-1.6h2a2 2 0 0 1 2 1.6v1.2z" fill="none" stroke="#2e3338" stroke-width="0.9"/></svg>
<svg style="left:0.30px;top:146.90px" width="7.4" height="7.4" viewBox="0 0 8 8"><path d="M0.5 0.6h6.8v4.6l-2 2.2H0.5z" fill="#2e3338"/><path d="M1.6 2.2h4.4M1.6 3.8h4.4" stroke="#fff" stroke-width="0.6"/><path d="M5.3 7.4V5.2h2" fill="none" stroke="#fff" stroke-width="0.5"/></svg>
<svg style="left:0.30px;top:156.30px" width="7.4" height="7.4" viewBox="0 0 8 8"><path d="M0.8 0.5h4.2l2.2 2.2v4.8H0.8z" fill="none" stroke="#2e3338" stroke-width="0.9"/><path d="M5 0.5v2.2h2.2" fill="none" stroke="#2e3338" stroke-width="0.9"/><path d="M1.8 6.4l1.6-2M1.8 4.4l1.6 2" stroke="#2e3338" stroke-width="0.7"/></svg>
<div style="left:131.40px;top:12.90px;width:105.50px;height:105.10px;background:#f0f4fa;border:0.7px solid #c8cfd9;box-shadow:0.5px 0.5px 1px rgba(0,0,0,.25)"></div>
<div style="left:132.10px;top:13.60px;width:12.80px;height:103.70px;background:#f3f6fb;"></div>
<span style="left:151.10px;top:14.45px;font-size:6.6px;line-height:10px;color:#1c1c1c;transform:scaleX(0.946);"><u>F</u>irma auswählen</span>
<span style="left:151.10px;top:23.85px;font-size:6.6px;line-height:10px;color:#1c1c1c;transform:scaleX(0.971);"><u>W</u>ebclient</span>
<span style="left:151.10px;top:33.25px;font-size:6.6px;line-height:10px;color:#1c1c1c;transform:scaleX(0.950);">W<u>e</u>chselkurse und Indizes</span>
<span style="left:151.10px;top:42.65px;font-size:6.6px;line-height:10px;color:#1c1c1c;transform:scaleX(0.973);"><u>S</u>ysteminitialisierung</span>
<svg style="left:231.00px;top:45.20px" width="2.4" height="4.0" viewBox="0 0 2.4 4.0"><polygon points="0,0 2.3,2.0 0,4.0" fill="#222"/></svg>
<div style="left:132.10px;top:51.90px;width:104.10px;height:9.40px;background:#e3ebf7;"></div>
<span style="left:151.10px;top:52.05px;font-size:6.6px;line-height:10px;color:#1c1c1c;transform:scaleX(1.000);"><u>D</u>efinition</span>
<svg style="left:231.00px;top:54.60px" width="2.4" height="4.0" viewBox="0 0 2.4 4.0"><polygon points="0,0 2.3,2.0 0,4.0" fill="#fff"/></svg>
<span style="left:151.10px;top:61.45px;font-size:6.6px;line-height:10px;color:#1c1c1c;transform:scaleX(1.047);">D<u>a</u>tenimport/-export</span>
<svg style="left:231.00px;top:64.00px" width="2.4" height="4.0" viewBox="0 0 2.4 4.0"><polygon points="0,0 2.3,2.0 0,4.0" fill="#222"/></svg>
<span style="left:151.10px;top:70.85px;font-size:6.6px;line-height:10px;color:#1c1c1c;transform:scaleX(1.001);">D<u>i</u>enstprogramme</span>
<svg style="left:231.00px;top:73.40px" width="2.4" height="4.0" viewBox="0 0 2.4 4.0"><polygon points="0,0 2.3,2.0 0,4.0" fill="#222"/></svg>
<span style="left:151.10px;top:80.25px;font-size:6.6px;line-height:10px;color:#1c1c1c;transform:scaleX(0.973);"><u>G</u>enehmigungsprozess</span>
<svg style="left:231.00px;top:82.80px" width="2.4" height="4.0" viewBox="0 0 2.4 4.0"><polygon points="0,0 2.3,2.0 0,4.0" fill="#222"/></svg>
<span style="left:151.10px;top:89.65px;font-size:6.6px;line-height:10px;color:#1c1c1c;transform:scaleX(0.997);">Add<u>-</u>ons</span>
<svg style="left:231.00px;top:92.20px" width="2.4" height="4.0" viewBox="0 0 2.4 4.0"><polygon points="0,0 2.3,2.0 0,4.0" fill="#222"/></svg>
<span style="left:151.10px;top:99.05px;font-size:6.6px;line-height:10px;color:#1c1c1c;transform:scaleX(1.000);">W<u>o</u>rkflow</span>
<svg style="left:231.00px;top:101.60px" width="2.4" height="4.0" viewBox="0 0 2.4 4.0"><polygon points="0,0 2.3,2.0 0,4.0" fill="#222"/></svg>
<span style="left:151.10px;top:108.45px;font-size:6.6px;line-height:10px;color:#1c1c1c;transform:scaleX(1.007);">Ala<u>r</u>mfunktionen</span>
<div style="left:234.20px;top:50.80px;width:90.80px;height:114.60px;background:#f0f4fa;border:0.7px solid #c8cfd9;box-shadow:0.5px 0.5px 1px rgba(0,0,0,.25)"></div>
<div style="left:234.90px;top:51.50px;width:13.00px;height:113.20px;background:#f3f6fb;"></div>
<span style="left:254.30px;top:52.45px;font-size:6.6px;line-height:10px;color:#1c1c1c;transform:scaleX(0.984);"><u>A</u>llgemein</span>
<svg style="left:319.20px;top:55.00px" width="2.4" height="4.0" viewBox="0 0 2.4 4.0"><polygon points="0,0 2.3,2.0 0,4.0" fill="#222"/></svg>
<span style="left:254.30px;top:61.85px;font-size:6.6px;line-height:10px;color:#1c1c1c;transform:scaleX(0.926);"><u>F</u>inanzwesen</span>
<svg style="left:319.20px;top:64.40px" width="2.4" height="4.0" viewBox="0 0 2.4 4.0"><polygon points="0,0 2.3,2.0 0,4.0" fill="#222"/></svg>
<span style="left:254.30px;top:71.25px;font-size:6.6px;line-height:10px;color:#1c1c1c;transform:scaleX(1.029);"><u>O</u>pportunitys</span>
<svg style="left:319.20px;top:73.80px" width="2.4" height="4.0" viewBox="0 0 2.4 4.0"><polygon points="0,0 2.3,2.0 0,4.0" fill="#222"/></svg>
<span style="left:254.30px;top:80.65px;font-size:6.6px;line-height:10px;color:#1c1c1c;transform:scaleX(0.984);"><u>U</u>msatz</span>
<svg style="left:319.20px;top:83.20px" width="2.4" height="4.0" viewBox="0 0 2.4 4.0"><polygon points="0,0 2.3,2.0 0,4.0" fill="#222"/></svg>
<span style="left:254.30px;top:90.05px;font-size:6.6px;line-height:10px;color:#1c1c1c;transform:scaleX(0.954);"><u>E</u>inkauf</span>
<svg style="left:319.20px;top:92.60px" width="2.4" height="4.0" viewBox="0 0 2.4 4.0"><polygon points="0,0 2.3,2.0 0,4.0" fill="#222"/></svg>
<span style="left:254.30px;top:99.45px;font-size:6.6px;line-height:10px;color:#1c1c1c;transform:scaleX(0.959);"><u>G</u>eschäftspartner</span>
<svg style="left:319.20px;top:102.00px" width="2.4" height="4.0" viewBox="0 0 2.4 4.0"><polygon points="0,0 2.3,2.0 0,4.0" fill="#222"/></svg>
<span style="left:254.30px;top:108.85px;font-size:6.6px;line-height:10px;color:#1c1c1c;transform:scaleX(0.955);"><u>B</u>ankenabwicklung</span>
<svg style="left:319.20px;top:111.40px" width="2.4" height="4.0" viewBox="0 0 2.4 4.0"><polygon points="0,0 2.3,2.0 0,4.0" fill="#222"/></svg>
<div style="left:234.90px;top:118.10px;width:89.40px;height:9.40px;background:#e3ebf7;"></div>
<span style="left:254.30px;top:118.25px;font-size:6.6px;line-height:10px;color:#1c1c1c;transform:scaleX(0.974);"><u>L</u>agerverwaltung</span>
<svg style="left:319.20px;top:120.80px" width="2.4" height="4.0" viewBox="0 0 2.4 4.0"><polygon points="0,0 2.3,2.0 0,4.0" fill="#fff"/></svg>
<span style="left:254.30px;top:127.65px;font-size:6.6px;line-height:10px;color:#1c1c1c;transform:scaleX(0.909);"><u>R</u>essourcen</span>
<svg style="left:319.20px;top:130.20px" width="2.4" height="4.0" viewBox="0 0 2.4 4.0"><polygon points="0,0 2.3,2.0 0,4.0" fill="#222"/></svg>
<span style="left:254.30px;top:137.05px;font-size:6.6px;line-height:10px;color:#1c1c1c;transform:scaleX(0.909);"><u>S</u>ervice</span>
<svg style="left:319.20px;top:139.60px" width="2.4" height="4.0" viewBox="0 0 2.4 4.0"><polygon points="0,0 2.3,2.0 0,4.0" fill="#222"/></svg>
<span style="left:254.30px;top:146.45px;font-size:6.6px;line-height:10px;color:#1c1c1c;transform:scaleX(0.999);"><u>P</u>roduktion</span>
<svg style="left:319.20px;top:149.00px" width="2.4" height="4.0" viewBox="0 0 2.4 4.0"><polygon points="0,0 2.3,2.0 0,4.0" fill="#222"/></svg>
<span style="left:254.30px;top:155.85px;font-size:6.6px;line-height:10px;color:#1c1c1c;transform:scaleX(0.936);">Ele<u>k</u>tronische Belege</span>
<svg style="left:319.20px;top:158.40px" width="2.4" height="4.0" viewBox="0 0 2.4 4.0"><polygon points="0,0 2.3,2.0 0,4.0" fill="#222"/></svg>
<div style="left:322.50px;top:116.60px;width:142.10px;height:132.64px;background:#f0f4fa;border:0.7px solid #c8cfd9;box-shadow:0.5px 0.5px 1px rgba(0,0,0,.25)"></div>
<div style="left:323.20px;top:117.30px;width:13.00px;height:131.24px;background:#f3f6fb;"></div>
<span style="left:342.30px;top:117.69px;font-size:6.6px;line-height:10px;color:#1c1c1c;transform:scaleX(0.999);"><u>A</u>rtikelgruppen</span>
<span style="left:342.30px;top:127.08px;font-size:6.6px;line-height:10px;color:#1c1c1c;transform:scaleX(0.968);">A<u>r</u>tikeleigenschaften</span>
<span style="left:342.30px;top:136.46px;font-size:6.6px;line-height:10px;color:#1c1c1c;transform:scaleX(0.919);"><u>L</u>ager</span>
<div style="left:323.20px;top:145.70px;width:140.70px;height:9.38px;background:#e3ebf7;"></div>
<span style="left:342.30px;top:145.85px;font-size:6.6px;line-height:10px;color:#1c1c1c;transform:scaleX(0.963);"><u>M</u>aßeinheiten</span>
<span style="left:342.30px;top:155.23px;font-size:6.6px;line-height:10px;color:#1c1c1c;transform:scaleX(0.982);">M<u>e</u>ngeneinheitengruppen</span>
<span style="left:342.30px;top:164.62px;font-size:6.6px;line-height:10px;color:#1c1c1c;transform:scaleX(0.965);">L<u>ä</u>nge und Breite</span>
<span style="left:342.30px;top:174.00px;font-size:6.6px;line-height:10px;color:#1c1c1c;transform:scaleX(0.944);"><u>G</u>ewicht</span>
<span style="left:342.30px;top:183.39px;font-size:6.6px;line-height:10px;color:#1c1c1c;transform:scaleX(0.976);"><u>Z</u>ollgruppen</span>
<span style="left:342.30px;top:192.77px;font-size:6.6px;line-height:10px;color:#1c1c1c;transform:scaleX(0.957);"><u>H</u>ersteller</span>
<span style="left:342.30px;top:202.16px;font-size:6.6px;line-height:10px;color:#1c1c1c;transform:scaleX(0.955);"><u>V</u>ersandarten</span>
<span style="left:342.30px;top:211.54px;font-size:6.6px;line-height:10px;color:#1c1c1c;transform:scaleX(0.973);"><u>O</u>rte</span>
<span style="left:342.30px;top:220.93px;font-size:6.6px;line-height:10px;color:#1c1c1c;transform:scaleX(0.988);"><u>I</u>nventurzyklen</span>
<span style="left:342.30px;top:230.31px;font-size:6.6px;line-height:10px;color:#1c1c1c;transform:scaleX(0.984);"><u>B</u>estimmung der regelmäßigen Inventur</span>
<span style="left:342.30px;top:239.70px;font-size:6.6px;line-height:10px;color:#1c1c1c;transform:scaleX(0.959);">Ver<u>p</u>ackungsarten</span>
<svg style="left:0.00px;top:0.00px" width="642" height="432" viewBox="0 0 642 432"><path d="M59.8 23.1L140.5 52.8" stroke="#f6921e" stroke-width="1.9" fill="none" stroke-linecap="round"/><polygon points="148.8,55 144.4,48 138.5,57.4" fill="#f6921e"/><path d="M219 59.3C220 80 221.5 95 224 104C227 114 235 123.5 246 127.3" stroke="#f6921e" stroke-width="1.9" fill="none" stroke-linecap="round"/><polygon points="254.5,128 246,122 246,133" fill="#f6921e"/><path d="M307.5 124.8C310 134 315 143 322 147.5C325 149.3 328 150.3 331 150.8" stroke="#f6921e" stroke-width="1.9" fill="none" stroke-linecap="round"/><polygon points="338,151.3 330.3,145.5 330.3,157" fill="#f6921e"/><path d="M389 151C420 151 441 170 441 216L440.5 254" stroke="#f6921e" stroke-width="1.9" fill="none" stroke-linecap="round"/><polygon points="434,253.5 446.3,253.5 440.2,262.5" fill="#f6921e"/></svg>
</div></body></html>
